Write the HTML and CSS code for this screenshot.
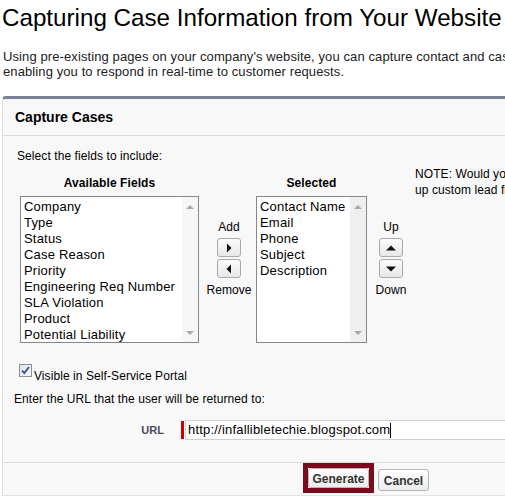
FILE: index.html
```html
<!DOCTYPE html>
<html>
<head>
<meta charset="utf-8">
<link rel="stylesheet" href="styles.css">
</head>
<body>
<div class="page">
  <h1 class="title">Capturing Case Information from Your Website</h1>
  <p class="intro">Using pre-existing pages on your company's website, you can capture contact and case information submitted by your customers,<br>enabling you to respond in real-time to customer requests.</p>

  <div class="panel">
    <div class="panel-head">Capture Cases</div>
    <div class="panel-body">
      <div class="instr">Select the fields to include:</div>
      <div class="pick-row">
        <div class="dueling">
          <div class="col-head">Available Fields</div>
          <div></div>
          <div class="col-head">Selected</div>
          <div></div>

          <div class="listbox">
            <ul class="items">
              <li>Company</li>
              <li>Type</li>
              <li>Status</li>
              <li>Case Reason</li>
              <li>Priority</li>
              <li>Engineering Req Number</li>
              <li>SLA Violation</li>
              <li>Product</li>
              <li>Potential Liability</li>
            </ul>
            <div class="sbar"><span class="sb-up"></span><span class="sb-down"></span></div>
          </div>

          <div class="movers movers-add">
            <span class="lbl-top">Add</span>
            <button class="arrow-btn" type="button"><svg width="8" height="10" viewBox="0 0 8 10"><path d="M2 0.5 L6.5 5 L2 9.5 Z" fill="#111"/></svg></button>
            <button class="arrow-btn" type="button"><svg width="8" height="10" viewBox="0 0 8 10"><path d="M6 0.5 L1.5 5 L6 9.5 Z" fill="#111"/></svg></button>
            <span class="lbl-bottom">Remove</span>
          </div>

          <div class="listbox">
            <ul class="items">
              <li>Contact Name</li>
              <li>Email</li>
              <li>Phone</li>
              <li>Subject</li>
              <li>Description</li>
            </ul>
            <div class="sbar sbar-dark"><span class="sb-up"></span><span class="sb-down"></span></div>
          </div>

          <div class="movers">
            <span class="lbl-top">Up</span>
            <button class="arrow-btn" type="button"><svg width="12" height="8" viewBox="0 0 12 8"><path d="M1 6.5 L6 1.5 L11 6.5 Z" fill="#111"/></svg></button>
            <button class="arrow-btn" type="button"><svg width="12" height="8" viewBox="0 0 12 8"><path d="M1 1.5 L6 6.5 L11 1.5 Z" fill="#111"/></svg></button>
            <span class="lbl-bottom">Down</span>
          </div>
        </div>
        <div class="note">NOTE: Would you like to set<br>up custom lead fields before generating the HTML?</div>
      </div>

      <div class="check-row">
        <svg class="checkbox" width="13" height="13" viewBox="0 0 13 13">
          <defs>
            <linearGradient id="cbg" x1="0" y1="0" x2="1" y2="1">
              <stop offset="0" stop-color="#dfe3ea"/>
              <stop offset="1" stop-color="#f7f8fa"/>
            </linearGradient>
          </defs>
          <rect x="0.5" y="0.5" width="12" height="12" fill="url(#cbg)" stroke="#8e8f8f"/>
          <path d="M3 6.5 L5.3 9 L10 3" fill="none" stroke="#2c4c9c" stroke-width="1.8"/>
        </svg>
        <span class="check-label">Visible in Self-Service Portal</span>
      </div>

      <div class="instr2">Enter the URL that the user will be returned to:</div>

      <div class="url-row">
        <span class="url-label">URL</span>
        <span class="req"></span>
        <div class="url-input">http://infallibletechie.blogspot.com<span class="caret"></span></div>
      </div>
    </div>
    <div class="panel-foot">
      <span class="gen-wrap"><button class="btn btn-gen" type="button">Generate</button></span>
      <button class="btn btn-cancel" type="button">Cancel</button>
    </div>
  </div>
</div>
</body>
</html>
```
FILE: styles.css
```css
html, body {
  margin: 0;
  padding: 0;
  overflow: hidden;
  background: #fff;
}

body {
  font-family: "Liberation Sans", Arial, sans-serif;
  color: #000;
}

.page {
  width: 760px;
  padding-left: 2px;
}

.title {
  margin: 0;
  padding-top: 3px;
  font-size: 24.2px;
  font-weight: normal;
  line-height: 30px;
  color: #000;
  white-space: nowrap;
}

.intro {
  margin: 16px 0 0 1px;
  font-size: 13px;
  line-height: 15px;
  letter-spacing: 0.1px;
  color: #222;
  white-space: nowrap;
}

.panel {
  margin-top: 17px;
  width: 726px;
  background: #f8f8f8;
  border: 1px solid #e2e2e2;
  border-top: 3px solid #7b8296;
  border-radius: 4px 4px 0 0;
}

.panel-head {
  height: 36px;
  line-height: 37px;
  padding-left: 12px;
  font-size: 14px;
  font-weight: bold;
  border-bottom: 1px solid #dbdbdb;
}

.panel-body {
  padding: 13px 0 22px 14px;
  font-size: 12px;
  letter-spacing: 0.08px;
}

.instr {
  line-height: 14px;
}

.pick-row {
  display: flex;
  align-items: flex-start;
}

.dueling {
  display: grid;
  grid-template-columns: 179px 57px 111px 48px;
  row-gap: 6px;
  margin-left: 3px;
  padding-top: 13px;
}

.col-head {
  font-weight: bold;
  font-size: 12px;
  line-height: 14px;
  text-align: center;
}

.listbox {
  height: 147px;
  box-sizing: border-box;
  border: 1px solid #828790;
  background: #fff;
  display: flex;
}

.items {
  flex: 1;
  list-style: none;
  margin: 0;
  padding: 2px 0 0 3px;
  font-size: 13px;
  line-height: 16px;
  letter-spacing: 0.2px;
  white-space: nowrap;
  overflow: hidden;
}

.sbar {
  width: 16px;
  background: #f6f6f6;
  display: flex;
  flex-direction: column;
  justify-content: space-between;
  align-items: center;
  padding: 8px 0 7px;
}

.sbar-dark {
  background: #efefef;
}

.sb-up {
  width: 0;
  height: 0;
  border-left: 4px solid transparent;
  border-right: 4px solid transparent;
  border-bottom: 4px solid #a8a8a8;
}

.sb-down {
  width: 0;
  height: 0;
  border-left: 4px solid transparent;
  border-right: 4px solid transparent;
  border-top: 4px solid #a8a8a8;
}

.movers {
  display: flex;
  flex-direction: column;
  align-items: center;
  padding-top: 24px;
  font-size: 12px;
  line-height: 14px;
}

.movers-add {
  padding-left: 3px;
}

.lbl-top {
  margin-bottom: 4px;
}

.lbl-bottom {
  margin-top: 3px;
}

.arrow-btn {
  width: 24px;
  height: 19px;
  padding: 0;
  margin-bottom: 2px;
  border: 1px solid #a9a9a9;
  border-radius: 3px;
  background: linear-gradient(#fbfbfb, #e8e8e8);
  display: flex;
  align-items: center;
  justify-content: center;
}

.note {
  margin-top: 3px;
  font-size: 12px;
  line-height: 16px;
  white-space: nowrap;
}

.check-row {
  display: flex;
  align-items: flex-start;
  margin-top: 21px;
  margin-left: 2px;
}

.checkbox {
  margin-top: 0;
  flex: none;
}

.check-label {
  margin-left: 2px;
  padding-top: 5px;
  line-height: 14px;
}

.instr2 {
  margin: 9px 0 0 -3px;
  line-height: 14px;
}

.url-row {
  display: flex;
  align-items: center;
  margin: 14px 0 0 -3px;
}

.url-label {
  width: 150px;
  text-align: right;
  font-size: 11px;
  font-weight: bold;
  color: #4a4a56;
}

.req {
  width: 3px;
  height: 18px;
  margin-left: 17px;
  background: #c00;
}

.url-input {
  margin-left: 1px;
  width: 420px;
  height: 18px;
  border: 1px solid #cfcfcf;
  background: #fff;
  padding-left: 2px;
  font-size: 13px;
  line-height: 18px;
  letter-spacing: 0.2px;
  display: flex;
  align-items: center;
  white-space: nowrap;
}

.caret {
  display: inline-block;
  width: 1px;
  height: 15px;
  background: #000;
}

.panel-foot {
  border-top: 1px solid #dbdbdb;
  height: 32px;
  display: flex;
  justify-content: center;
  align-items: flex-start;
}

.gen-wrap {
  border: 5px solid #7b0a1d;
  display: flex;
}

.btn {
  font-family: "Liberation Sans", Arial, sans-serif;
  font-size: 12px;
  font-weight: bold;
  color: #333;
  border: 1px solid #b5b5b5;
  border-radius: 3px;
  background: linear-gradient(#ffffff, #ececec);
  padding: 0;
  padding-top: 2px;
}

.btn-gen {
  width: 61px;
  height: 20px;
}

.btn-cancel {
  width: 51px;
  height: 22px;
  margin-top: 6px;
  margin-left: 4px;
}
```
